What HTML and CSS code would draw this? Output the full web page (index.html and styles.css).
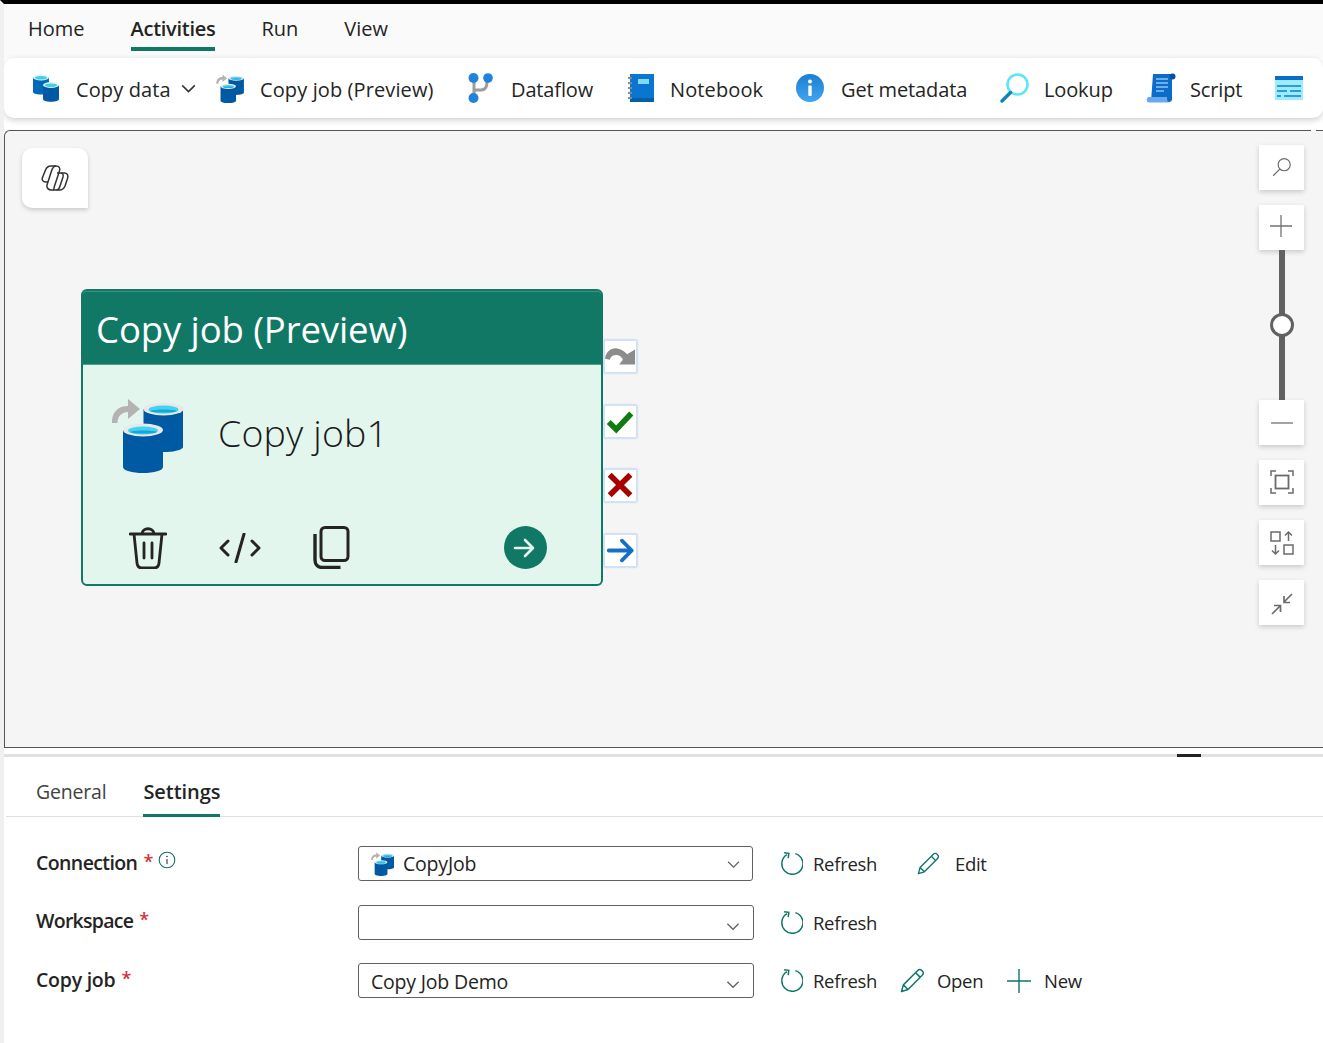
FILE: index.html
```html
<!DOCTYPE html>
<html lang="en">
<head>
<meta charset="utf-8">
<title>Copy job</title>
<link rel="stylesheet" href="styles.css">
</head>
<body>
<svg class="defs" width="0" height="0" aria-hidden="true">
  <defs>
    <linearGradient id="info" x1="0" x2="0" y1="0" y2="1"><stop offset="0" stop-color="#1b7fd0"/><stop offset="1" stop-color="#42a5ee"/></linearGradient>
    <symbol id="copyjob" viewBox="0 0 71 75">
      <path d="M0 25C0 12 8 8 16 8V1l12 10-12 10v-7C10 14 5.500 18 5.500 25z" fill="#b3b3b3"/>
      <path d="M31.500 11v37c0 3.500 9 6 20 6s20-2.500 20-6V11z" fill="#0059a3"/>
      <ellipse cx="51.500" cy="11" rx="20" ry="6.500" fill="#e8e8e8"/>
      <ellipse cx="51.500" cy="11.500" rx="15" ry="4" fill="#41d4f2"/>
      <path d="M38 13c3-2 24-2 27 0-3 2-24 2-27 0z" fill="#1aa5d8"/>
      <path d="M11 32v37c0 3.500 9 6 20 6s20-2.500 20-6V32z" fill="#0059a3"/>
      <ellipse cx="31" cy="32" rx="20" ry="6.500" fill="#e8e8e8"/>
      <ellipse cx="31" cy="32.500" rx="15" ry="4" fill="#41d4f2"/>
      <path d="M18 34c3-2 24-2 27 0-3 2-24 2-27 0z" fill="#1aa5d8"/>
    </symbol>
    <symbol id="copydata" viewBox="0 0 26 28">
      <path d="M0 3v15c0 1.500 3 2.500 8 2.500s8-1 8-2.500V3z" fill="#0069b8"/>
      <ellipse cx="8" cy="3.500" rx="8" ry="3" fill="#dff3f9"/>
      <ellipse cx="8" cy="3.700" rx="6" ry="1.800" fill="#40cdea"/>
      <path d="M10 11v14c0 1.700 3 2.700 8 2.700s8-1 8-2.700V11z" fill="#0059a3"/>
      <ellipse cx="18" cy="11" rx="8" ry="3" fill="#dff3f9"/>
      <ellipse cx="18" cy="11.200" rx="6" ry="1.800" fill="#40cdea"/>
    </symbol>
    <symbol id="refresh" viewBox="0 0 24 24">
      <path d="M7.300 2.800A11 11 0 1 0 16 1.700" fill="none" stroke="#0f7468" stroke-width="1.500"/>
      <path d="M4 1h5v5" fill="none" stroke="#0f7468" stroke-width="1.500" transform="rotate(8 6 3)"/>
    </symbol>
    <symbol id="pencil" viewBox="0 0 24 24">
      <path d="M1.500 22.500l1.700-6.300L16.800 2.600a3 3 0 0 1 4.500 4.400L7.700 20.700zM3.200 16.200l4.500 4.500M15 4.500l4.500 4.500" fill="none" stroke="#0f7468" stroke-width="1.400" stroke-linejoin="round"/>
    </symbol>
    <symbol id="chev" viewBox="0 0 12 8">
      <path d="M1 1.500l5 5 5-5" fill="none" stroke="#616161" stroke-width="1.100"/>
    </symbol>
  </defs>
</svg>

<div class="app">
  <nav class="tabs">
    <span class="tab">Home</span>
    <span class="tab tab-active">Activities</span>
    <span class="tab">Run</span>
    <span class="tab">View</span>
  </nav>

  <div class="toolbar">
    <div class="tool tool-copydata">
      <svg class="ic-copydata"><use href="#copydata"/></svg>
      <span>Copy data</span>
      <svg class="ic-chev" viewBox="0 0 16 10"><path d="M1 1.500l7 7 7-7" fill="none" stroke="#333" stroke-width="1.700"/></svg>
    </div>
    <div class="tool tool-copyjob">
      <svg class="ic-copyjob"><use href="#copyjob"/></svg>
      <span>Copy job (Preview)</span>
    </div>
    <div class="tool tool-dataflow tool-tight">
      <svg class="ic-dataflow" viewBox="0 0 25 30">
        <path d="M6 6v18M6 17h7c4 0 6-3 6-8" fill="none" stroke="#9c9c9c" stroke-width="3"/>
        <circle cx="5.500" cy="5" r="5" fill="#1f83d8"/><circle cx="20" cy="5" r="4.800" fill="#1f83d8"/><circle cx="5.500" cy="25" r="5" fill="#1f83d8"/>
      </svg>
      <span>Dataflow</span>
    </div>
    <div class="tool tool-notebook">
      <svg class="ic-notebook" viewBox="0 0 26 28">
        <rect x="2" y="0" width="24" height="28" fill="#0b76cf"/>
        <rect x="2" y="24" width="24" height="4" fill="#055fa8"/>
        <rect x="10" y="5" width="11" height="5" fill="#7fdcf3"/>
        <path d="M0 4h4M0 9h4M0 14h4M0 19h4M0 24h4" stroke="#8a8a8a" stroke-width="2"/>
      </svg>
      <span>Notebook</span>
    </div>
    <div class="tool tool-meta tool-tight">
      <svg class="ic-info" viewBox="0 0 28 28">
        <circle cx="14" cy="14" r="14" fill="url(#info)"/>
        <circle cx="14" cy="7.500" r="2" fill="#fff"/>
        <rect x="12.300" y="11.500" width="3.400" height="10.500" rx="1" fill="#fff"/>
      </svg>
      <span>Get metadata</span>
    </div>
    <div class="tool tool-lookup tool-tight">
      <svg class="ic-lookup" viewBox="0 0 30 30">
        <circle cx="17.500" cy="11.500" r="10" fill="#fff" stroke="#5ce6fb" stroke-width="2.600"/>
        <path d="M10.500 19.500L2 28" stroke="#0f85b5" stroke-width="3.400" stroke-linecap="round"/>
      </svg>
      <span>Lookup</span>
    </div>
    <div class="tool tool-script tool-tight">
      <svg class="ic-script" viewBox="0 0 30 30">
        <path d="M7 1h19v25c0 2-1 3-3 3H5z" fill="#0b6cc9"/>
        <circle cx="26.500" cy="3.500" r="3" fill="#054f99"/>
        <path d="M3 24h18c0 3 .5 5 2 5.500H3c-3 0-3-5.500 0-5.500z" fill="#6aa7ee"/>
        <path d="M10 6h12M10 10h12M10 14h12M10 18h8" stroke="#8fc3f2" stroke-width="1.500"/>
      </svg>
      <span>Script</span>
    </div>
    <div class="tool tool-last">
      <svg class="ic-last" viewBox="0 0 28 24">
        <rect y="0" width="28" height="24" fill="#9cecfb"/>
        <rect y="0" width="28" height="4" fill="#0b6cc9"/>
        <path d="M2 10h24M2 15h10M15 15h11M2 20h4M9 20h17" stroke="#0b7fd4" stroke-width="1.700"/>
      </svg>
    </div>
  </div>

  <main class="canvas">
    <button class="copilot" type="button" aria-label="Copilot">
      <svg viewBox="0 0 28 26" class="ic-copilot" fill="none" stroke="#333" stroke-width="1.500" stroke-linejoin="round">
        <path d="M15 1H10C7 1 5.500 2.500 4.500 5L1.500 12.500C.5 15 2 17 4.500 17H7"/>
        <path d="M12 25h6.500c3 0 4.500-1.500 5.500-4l2.500-7.500C27.500 10 26 8 23.500 8H16"/>
        <path d="M15 1c3 0 4.500 2 3.500 5l-5 15c-.7 2.300-.5 4-1.500 4"/>
        <path d="M15 1c-2.500 0-3.500 2-4.500 5L6 20c-.8 3 1.500 5 4.500 5H12"/>
        <path d="M20 8c2 0 2.500 2 2 4l-3 9c-.7 2.300-1.500 4-3.500 4"/>
      </svg>
    </button>

    <div class="zoombar">
      <button class="zbtn zsearch" type="button" aria-label="Search">
        <svg viewBox="0 1 20 20"><circle cx="12" cy="8" r="5.500" fill="none" stroke="#6b6b6b" stroke-width="1.100"/><path d="M8 12l-6 6" stroke="#6b6b6b" stroke-width="1.100"/></svg>
      </button>
      <button class="zbtn" type="button" aria-label="Zoom in">
        <svg viewBox="1 2 24 24"><path d="M12 1v22M1 12h22" stroke="#737373" stroke-width="1.300"/></svg>
      </button>
      <div class="zslider"><span class="zthumb"></span></div>
      <button class="zbtn zafter" type="button" aria-label="Zoom out">
        <svg viewBox="0 0 24 24"><path d="M1 12h22" stroke="#737373" stroke-width="1.300"/></svg>
      </button>
      <button class="zbtn zgap" type="button" aria-label="Fit">
        <svg viewBox="0 1 24 24" fill="none" stroke="#6b6b6b" stroke-width="1.500"><path d="M1 6V1h5M18 1h5v5M23 18v5h-5M6 23H1v-5"/><rect x="5.500" y="5.500" width="13" height="13" stroke-width="1.800"/></svg>
      </button>
      <button class="zbtn zgap" type="button" aria-label="Auto align">
        <svg viewBox="0 0 24 24" fill="none" stroke="#6b6b6b" stroke-width="1.500"><rect x="1" y="1" width="9" height="9"/><rect x="14" y="14" width="9" height="9"/><path d="M18.500 10V1.500M15 4.500l3.500-3.500 3.500 3.500M5.500 14v8.500M2 19.500l3.500 3.500 3.500-3.500"/></svg>
      </button>
      <button class="zbtn zgap" type="button" aria-label="Collapse">
        <svg viewBox="0 -1 24 24" fill="none" stroke="#6b6b6b" stroke-width="1.700"><path d="M2 22l8-8M4 13.500h6.500V20M22 2l-8 8M20 10.500h-6V4"/></svg>
      </button>
    </div>

    <article class="node">
      <header class="node-head">Copy job (Preview)</header>
      <div class="node-body">
        <div class="node-main">
          <svg class="ic-node"><use href="#copyjob"/></svg>
          <span class="node-name">Copy job1</span>
        </div>
        <div class="node-foot">
          <svg class="ic-trash" viewBox="0 0 38 42" fill="none" stroke="#242424" stroke-width="2.800" stroke-linecap="round">
            <path d="M1 7h36M13 7c0-7 12-7 12 0M5 7l3 29c.3 3 2 5 5 5h12c3 0 4.700-2 5-5l3-29M15 16v15M23 16v15"/>
          </svg>
          <svg class="ic-code" viewBox="0 0 42 30" fill="none" stroke="#242424" stroke-width="3" stroke-linecap="round" stroke-linejoin="round">
            <path d="M9 8l-7 7 7 7M33 8l7 7-7 7M25 1l-8 28"/>
          </svg>
          <svg class="ic-copy" viewBox="0 0 37 43" fill="none" stroke="#242424" stroke-width="3">
            <rect x="8" y="1.500" width="27" height="33" rx="4"/>
            <path d="M2 8v26c0 4.500 3 7.500 7.500 7.500h18" stroke-width="3.400"/>
          </svg>
          <span class="node-go">
            <svg viewBox="0 0 22 20" fill="none" stroke="#e3f6ee" stroke-width="2.600" stroke-linecap="round" stroke-linejoin="round"><path d="M2 10h18M12 2l8 8-8 8"/></svg>
          </span>
        </div>
      </div>
      <div class="ports">
        <span class="port"><svg viewBox="0 0 33 33"><path d="M0 19c1-8 7-12 13-11 4 .7 8 3 10.500 6l8.500-5v16H15l4-5c-1-3-4-5-7-5-4 0-6 2-7 5z" fill="#8c8c8c"/></svg></span>
        <span class="port"><svg viewBox="0 0 33 33"><path d="M4 17l8 8L28 8" fill="none" stroke="#107c10" stroke-width="6"/></svg></span>
        <span class="port"><svg viewBox="0 0 33 33"><path d="M5 5l22 22M27 5L5 27" fill="none" stroke="#a80000" stroke-width="6"/></svg></span>
        <span class="port"><svg viewBox="0 0 33 33"><path d="M4 16.500h24M18 6l10.500 10.500L18 27" fill="none" stroke="#1570c4" stroke-width="4" stroke-linecap="round" stroke-linejoin="round"/></svg></span>
      </div>
    </article>
  </main>

  <section class="panel">
    <span class="grip"></span>
    <div class="ptabs">
      <span class="ptab">General</span>
      <span class="ptab ptab-active">Settings</span>
    </div>
    <div class="form">
      <div class="row row-first">
        <div class="label"><b>Connection</b><i class="req">*</i>
          <svg class="ic-i" viewBox="0 0 18 18"><circle cx="9" cy="9" r="7.800" fill="none" stroke="#0f7468" stroke-width="1.100"/><path d="M9 8v5" stroke="#333" stroke-width="1.100"/><circle cx="9" cy="5.500" r=".8" fill="#333"/></svg>
        </div>
        <div class="select select-first">
          <svg class="ic-sel"><use href="#copyjob"/></svg>
          <span>CopyJob</span>
          <svg class="sel-chev sel-chev-up"><use href="#chev"/></svg>
        </div>
        <div class="action act-refresh"><svg class="ic-act"><use href="#refresh"/></svg><span>Refresh</span></div>
        <div class="action act-edit"><svg class="ic-act"><use href="#pencil"/></svg><span>Edit</span></div>
      </div>
      <div class="row row-second">
        <div class="label"><b>Workspace</b><i class="req">*</i></div>
        <div class="select"><svg class="sel-chev"><use href="#chev"/></svg></div>
        <div class="action act-refresh"><svg class="ic-act"><use href="#refresh"/></svg><span>Refresh</span></div>
      </div>
      <div class="row row-third">
        <div class="label"><b>Copy job</b><i class="req">*</i></div>
        <div class="select"><span class="sel-text">Copy Job Demo</span><svg class="sel-chev"><use href="#chev"/></svg></div>
        <div class="action act-refresh act-short"><svg class="ic-act"><use href="#refresh"/></svg><span>Refresh</span></div>
        <div class="action act-open"><svg class="ic-pen"><use href="#pencil"/></svg><span>Open</span></div>
        <div class="action act-new"><svg class="ic-act" viewBox="0 0 24 24"><path d="M12 0v24M0 12h24" stroke="#0f7468" stroke-width="1.400"/></svg><span>New</span></div>
      </div>
    </div>
  </section>
</div>
</body>
</html>
```

FILE: styles.css
```css
* { box-sizing: border-box; }
html, body { margin: 0; padding: 0; }
body {
  width: 1323px;
  height: 1043px;
  overflow: hidden;
  background: #fff;
  color: #242424;
  font-family: "Open Sans", "Noto Sans", sans-serif;
}
.defs { position: absolute; }
svg { display: block; flex: none; }

.app {
  height: 1043px;
  display: flex;
  flex-direction: column;
  border-top: 4px solid #000;
  border-left: 4px solid #f0f0f0;
  overflow: hidden;
}

/* top tabs */
.tabs {
  height: 54px;
  flex: none;
  background: #fafafa;
  display: flex;
  padding-left: 24px;
  font-size: 20px;
}
.tab {
  height: 47px;
  line-height: 50px;
  margin-right: 46px;
  border-bottom: 4px solid transparent;
}
.tab-active {
  font-weight: 600;
  border-bottom-color: #117865;
  letter-spacing: -0.27px;
}

.toolbar {
  height: 60px;
  flex: none;
  background: #fff;
  border-radius: 10px;
  box-shadow: 0 2px 6px rgba(0,0,0,.2);
  padding-left: 29px;
  display: grid;
  grid-template-columns: 183px 252px 160px 168px 204px 146px 129px 48px;
  align-items: center;
  font-size: 20px;
  position: relative;
}
.tool { display: flex; align-items: center; white-space: nowrap; letter-spacing: 0.11px; }
.tool span { padding-top: 2px; }
.tool-tight { letter-spacing: -0.13px; }
.ic-copydata { width: 26px; height: 28px; margin-right: 17px; }
.ic-chev { width: 15px; height: 9px; margin-left: 10px; }
.ic-copyjob { width: 28px; height: 29px; margin-right: 16px; }
.ic-dataflow { width: 25px; height: 30px; margin-right: 18px; }
.ic-notebook { width: 26px; height: 28px; margin-right: 16px; }
.ic-info { width: 28px; height: 28px; margin-right: 17px; }
.ic-lookup { width: 30px; height: 30px; margin-right: 14px; }
.ic-script { width: 30px; height: 30px; margin-right: 14px; }
.ic-last { width: 28px; height: 24px; }

/* canvas */
.canvas {
  height: 618px;
  flex: none;
  margin-top: 12px;
  position: relative;
  background: #f5f5f5;
  border: 1px solid #555;
  border-right: 0;
  border-top-left-radius: 6px;
}
.canvas::after {
  content: "";
  position: absolute;
  left: 1306px;
  top: -1px;
  width: 5px;
  height: 1px;
  background: #f5f5f5;
}
.copilot {
  position: absolute;
  left: 17px;
  top: 17px;
  width: 66px;
  height: 60px;
  padding: 0;
  border: 0;
  background: #fff;
  border-radius: 10px 10px 0 10px;
  box-shadow: 0 2px 4px rgba(0,0,0,.18);
  display: flex;
  align-items: center;
  justify-content: center;
}
.ic-copilot { width: 28px; height: 26px; }

.zoombar {
  position: absolute;
  left: 1254px;
  top: 14px;
  width: 45px;
  display: flex;
  flex-direction: column;
}
.zbtn {
  width: 45px;
  height: 45px;
  padding: 0;
  border: 0;
  background: #fff;
  box-shadow: 0 2px 5px rgba(0,0,0,.18);
  display: flex;
  align-items: center;
  justify-content: center;
}
.zbtn svg { width: 24px; height: 24px; overflow: visible; }
.zbtn.zsearch svg { width: 22px; height: 22px; }
.zsearch { margin-bottom: 15px; }
.zgap { margin-top: 15px; }
.zslider {
  position: relative;
  width: 6px;
  height: 150px;
  margin-left: 20px;
  background: #616161;
}
.zthumb {
  position: absolute;
  left: -9px;
  top: 63px;
  width: 24px;
  height: 24px;
  border: 3.500px solid #616161;
  border-radius: 50%;
  background: #fff;
}

/* node */
.node {
  position: absolute;
  left: 76px;
  top: 158px;
  width: 522px;
  height: 297px;
  border: 2px solid #117865;
  border-radius: 6px;
  display: flex;
  flex-direction: column;
  background: #e3f6ee;
}
.node-head {
  height: 74px;
  flex: none;
  background: #117865;
  border-bottom: 1px solid #4e9d8d;
  box-shadow: inset 0 1px #3f9280;
  border-radius: 3px 3px 0 0;
  color: #fff;
  font-size: 36.500px;
  line-height: 76px;
  padding-left: 13px;
  letter-spacing: -0.1px;
}
.node-body { flex: 1; display: flex; flex-direction: column; padding: 33px 0 0 29px; }
.node-main { display: flex; align-items: center; height: 75px; }
.ic-node { width: 71px; height: 75px; }
.node-name {
  margin-left: 35px;
  margin-top: -6px;
  font-size: 37.500px;
  font-weight: 300;
  letter-spacing: 0.15px;
  color: #1a1a1a;
}
.node-foot { display: flex; align-items: center; margin-top: 53px; height: 43px; padding-left: 17px; }
.ic-trash { width: 38px; height: 42px; }
.ic-code { width: 42px; height: 30px; margin-left: 52px; }
.ic-copy { width: 37px; height: 43px; margin-left: 52px; }
.node-go {
  width: 43px;
  height: 43px;
  margin-left: 154px;
  border-radius: 50%;
  background: #117865;
  display: flex;
  align-items: center;
  justify-content: center;
}
.node-go svg { width: 22px; height: 20px; margin-left: -3px; }

.ports {
  position: absolute;
  left: 521px;
  top: 49px;
  display: flex;
  flex-direction: column;
  gap: 31.500px;
}
.port {
  width: 33px;
  height: 33px;
  background: #fff;
  border: 1px solid #cfe2f6;
  box-shadow: 0 0 2px rgba(40,120,210,.45);
}
.port svg { width: 31px; height: 31px; }

/* bottom panel */
.panel {
  flex: 1;
  margin-top: 6px;
  background: #fff;
  border-top: 3px solid #e0e0e0;
  position: relative;
}
.grip {
  position: absolute;
  left: 1173px;
  top: -3px;
  width: 24px;
  height: 3px;
  background: #222;
}
.ptabs {
  height: 60px;
  margin-left: 2px;
  padding-left: 30px;
  border-bottom: 1px solid #e0e0e0;
  display: flex;
  font-size: 19.500px;
  letter-spacing: -0.2px;
}
.ptab {
  height: 60px;
  line-height: 69px;
  margin-right: 37px;
  color: #424242;
  border-bottom: 3px solid transparent;
}
.ptab-active {
  color: #242424;
  font-size: 20px;
  font-weight: 600;
  border-bottom-color: #117865;
  letter-spacing: -0.05px;
}

.form { padding-left: 32px; font-size: 19.500px; letter-spacing: -0.2px; }
.row { display: flex; align-items: center; height: 35px; }
.row-first { margin-top: 29px; }
.row-second { margin-top: 24px; }
.row-third { margin-top: 23px; }
.label {
  width: 322px;
  flex: none;
  display: flex;
  align-items: flex-start;
  align-self: flex-start;
  line-height: 34px;
}
.row-second .label { margin-top: -1px; }
.label b { font-weight: 600; letter-spacing: -0.6px; }
.row-second .label b { letter-spacing: -0.72px; }
.row-third .label b { letter-spacing: -0.25px; }
.req { color: #d13438; font-style: normal; font-weight: 600; font-size: 18px; margin-left: 6px; line-height: 30px; }
.ic-i { width: 18px; height: 18px; margin: 5px 0 0 5px; }

.select {
  width: 396px;
  height: 35px;
  flex: none;
  border: 1px solid #616161;
  border-radius: 3px;
  padding-left: 12px;
  display: flex;
  align-items: center;
  position: relative;
  margin-right: 26px;
}
.select-first { width: 395px; margin-right: 27px; }
.sel-text { padding-top: 2px; }
.ic-sel { width: 23px; height: 24px; margin-right: 9px; }
.sel-chev {
  position: absolute;
  right: 13px;
  top: 16px;
  width: 14px;
  height: 9px;
}
.sel-chev-up { top: 13px; right: 12px; width: 13px; }

.action { display: flex; align-items: center; flex: none; font-size: 18.500px; letter-spacing: -0.3px; }
.ic-act { width: 23px; height: 23px; margin-right: 10px; }
.ic-pen { width: 25px; height: 25px; margin-right: 12px; }
.act-refresh { width: 137px; }
.act-short { width: 120px; }
.act-edit .ic-act { margin-right: 15px; }
.act-open { width: 107px; }
.act-new .ic-act { width: 24px; height: 24px; margin-right: 13px; }
```
